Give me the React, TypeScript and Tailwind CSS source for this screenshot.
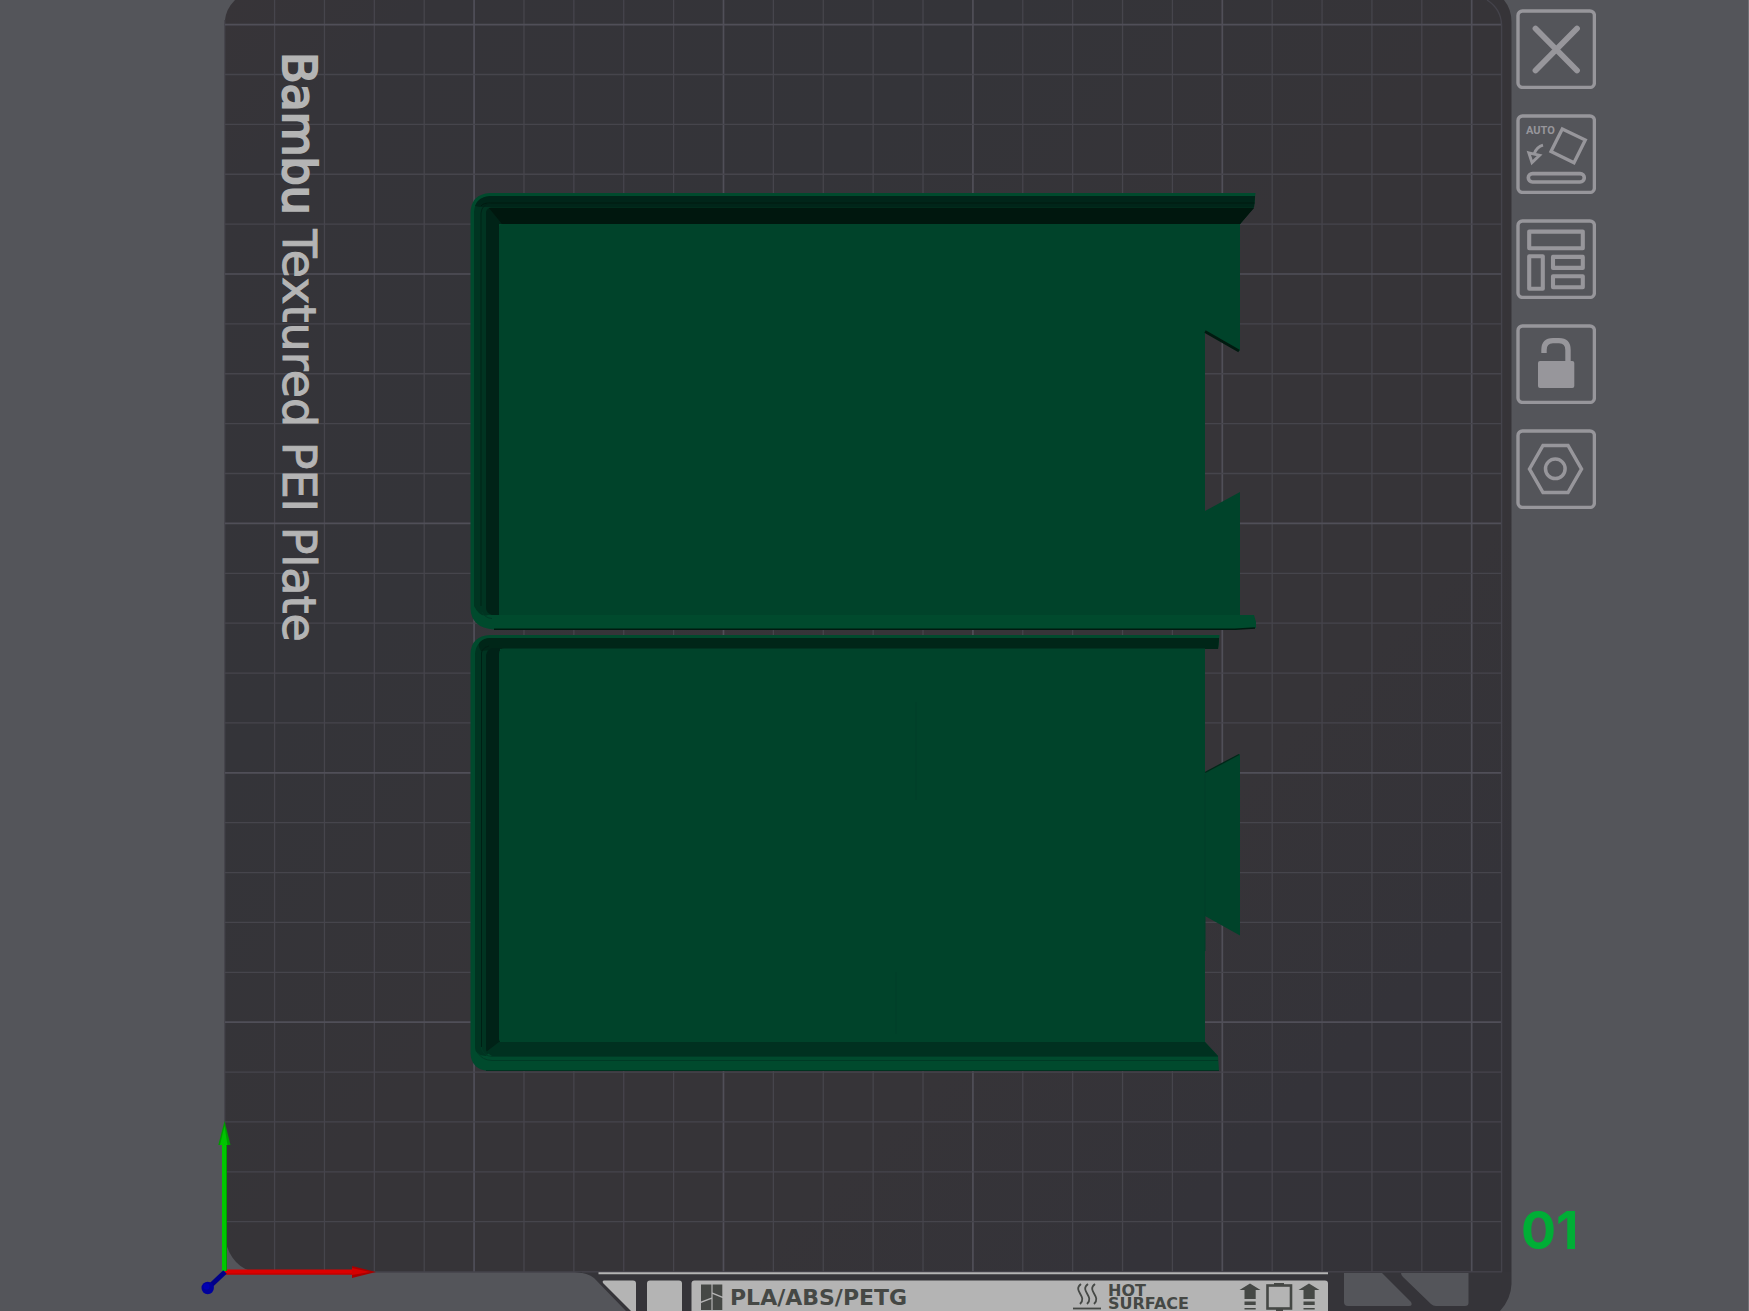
import type { ReactNode } from "react";

const CELL = 49.88;
const PLATE_X = 224.7;
const PLATE_Y = 24.6;

const columns = Array.from({ length: 26 }, (_, i) => i);
const rows = Array.from({ length: 25 }, (_, i) => i);

const tools: { label: string; icon: ReactNode }[] = [
  {
    label: "Remove plate",
    icon: (
      <path d="M19.5 19.5L61 61.5M61 19.5L19.5 61.5" strokeWidth="5.8" strokeLinecap="round" />
    ),
  },
  {
    label: "Auto orient",
    icon: (
      <>
        <text x="10" y="20" fill="currentColor" stroke="none" fontSize="11" fontWeight="700" fontFamily="Roboto, sans-serif">
          AUTO
        </text>
        <path d="M46.3 15L69.3 26L58 48.8L35 37.6Z" strokeWidth="3.3" />
        <path d="M27 31.2C22.5 32.5 20 35 18.3 39.5" strokeWidth="2.8" />
        <path d="M12.8 38.8L23.6 41.4L16 48.6Z" strokeWidth="2.9" />
        <rect x="12.3" y="59.6" width="56" height="8.4" rx="4.2" strokeWidth="3.6" />
      </>
    ),
  },
  {
    label: "Arrange",
    icon: (
      <g strokeWidth="4.1" strokeLinejoin="round">
        <rect x="13.2" y="12.6" width="53.6" height="16.6" />
        <rect x="13.2" y="37.2" width="13.6" height="32.6" />
        <rect x="37" y="37.9" width="29.8" height="11" />
        <rect x="37" y="57.2" width="29.8" height="11" />
      </g>
    ),
  },
  {
    label: "Lock plate",
    icon: (
      <>
        <path d="M28 29V26Q28 16.6 37 16.6H43Q52 16.6 52 26V39" strokeWidth="5.4" />
        <rect x="22" y="37" width="36.3" height="27" rx="2" fill="currentColor" stroke="none" />
      </>
    ),
  },
  {
    label: "Plate settings",
    icon: (
      <g strokeWidth="3.5">
        <path d="M13.5 40L27 16.5H52L65.5 40L52 63.5H27Z" />
        <circle cx="39.3" cy="39.8" r="9.8" />
      </g>
    ),
  },
];

function Grid() {
  return (
    <g fill="none">
      {columns.map((i) => (
        <path
          key={i}
          d={`M${PLATE_X + i * CELL} ${i === 0 ? 20 : 0}V${i === 0 ? 1240 : 1272}`}
          stroke={i % 5 === 0 && i > 0 ? "#504f58" : "#46454c"}
          strokeWidth={i % 5 === 0 && i > 0 ? 1.7 : 1.3}
        />
      ))}
      {rows.map((i) => (
        <path
          key={i}
          d={`M225 ${PLATE_Y + i * CELL}H1502`}
          stroke={i % 5 === 0 ? "#504f58" : "#46454c"}
          strokeWidth={i % 5 === 0 ? 1.7 : 1.3}
        />
      ))}
      <path d="M1487 0Q1501 9 1501.6 25V1272H255" stroke="#44434b" strokeWidth="1.4" />
    </g>
  );
}

function TopTray() {
  return (
    <g>
      {/* outer lip and the stepped walls inside it */}
      <path d="M490 193H1255.5L1254 207L1240 224V300H1200V600H1240V615H1254L1256 622V628L1235 629.5H494Q471 628 470.5 608V213Q471 194 490 193Z" fill="#004a2d" />
      <path d="M490 196H1255L1254 207L1240 224H499V615H488Q480 618 474 606V212Q475 197 490 196Z" fill="#003421" />
      <path d="M490 196H1255L1254 207H480L475 206Q478 197 490 196Z" fill="#002519" />
      <path d="M481 206Q483 203 490 203H1254.5" fill="none" stroke="#001a11" />
      <path d="M481 606V213Q482 204 491 203" fill="none" stroke="#002217" />
      <path d="M486 212Q487 208 491 207.5H1254L1240 224H499V615H492Q486 613 486 608Z" fill="#002317" />
      <path d="M489 208H1254L1240 224H502Z" fill="#00170e" />
      <path d="M482 612Q485 618 492 618.5" fill="none" stroke="#003a25" />
      <path d="M494 629.3H1235L1255 628" fill="none" stroke="#001a10" strokeWidth="1.5" />
      <path d="M504 224H1240V351L1205 331V511L1240 492V615H499V229Q499 224 504 224Z" fill="#00432a" />
      <path d="M1205 331.5L1239 351" stroke="#001a10" strokeWidth="2.6" />
    </g>
  );
}

function BottomTray() {
  return (
    <g>
      <path d="M490 635H1219.5L1218 649H1205V1042L1218 1056L1219 1071H488Q471 1069 470.5 1053V654Q471 636 490 635Z" fill="#004a2d" />
      <path d="M490 638H1219L1218 649H499V1042L486 1056Q475 1055 475 1048V654Q476 640 490 638Z" fill="#003421" />
      <path d="M490 638H1219L1218 649H499L481 651Q477 645 480 642Q484 638 490 638Z" fill="#002618" />
      <path d="M481.5 1047V653Q482 648 489 646" fill="none" stroke="#001f14" />
      <path d="M486 655Q487 649 493 648H500V1042L489 1053Q486 1052 486 1049Z" fill="#002217" />
      <path d="M499 1042H1205L1218 1056H492L486 1052Z" fill="#003120" />
      <path d="M481 1047Q483 1056 492 1056.5H1218M478 1053Q482 1060 492 1060.5H1218" fill="none" stroke="#003a25" />
      <path d="M486 1070.5H1219" stroke="#003320" />
      <path d="M504 648.5H1205V772.5L1240 754V935.5L1205 916V1042H502Q499 1042 499 1039V654Q499 648.5 504 648.5Z" fill="#00432a" />
      <path d="M1205 772.5L1239 754.5" stroke="#002819" strokeWidth="1.4" />
      <path d="M1205 774V951M916 702V800M896 972V1034" fill="none" stroke="#003f28" />
    </g>
  );
}

function FrontLabel() {
  return (
    <g>
      <path d="M575 1272H1511.5V1284Q1511 1299 1500 1311H626L594 1278Q588 1273 575 1272Z" fill="#353439" />
      <g fill="#54555a">
        <path d="M1344 1273H1382L1411 1302Q1413 1306 1409 1306H1348Q1344 1306 1344 1302Z" />
        <path d="M1401 1273H1468.5V1303Q1468.5 1306 1465 1306H1436Q1433 1306 1431 1304L1403 1277Q1401 1275 1401 1273Z" />
      </g>
      <path d="M582 1272H1502" stroke="#44434b" />
      <path d="M598.5 1273.2H1328" stroke="#b4b4b4" strokeWidth="2" />
      <g fill="#b4b4b4">
        <path d="M604 1280.5H633Q636 1280.5 636 1283.5V1311H631L603 1283Q602 1280.5 604 1280.5Z" />
        <path d="M647 1311V1283.5Q647 1280.5 650 1280.5H679Q682 1280.5 682 1283.5V1311Z" />
        <path d="M691.5 1311V1283.5Q691.5 1280.5 694.5 1280.5H1325Q1328 1280.5 1328 1283.5V1311Z" />
      </g>
      <g fill="#454845">
        <path d="M701 1284.5H711.4V1297.5L701 1301.5ZM712.6 1284.5H722.3V1296.5L712.6 1292.5ZM701 1303L711.4 1299V1310H701ZM712.6 1294L722.3 1298V1310H712.6Z" />
        <text x="730" y="1305" fontSize="22" fontWeight="700" fontFamily="'DejaVu Sans', sans-serif">
          PLA/ABS/PETG
        </text>
        <text fontSize="16" fontWeight="700" fontFamily="'DejaVu Sans', sans-serif">
          <tspan x="1108" y="1296">HOT</tspan>
          <tspan x="1108" y="1309">SURFACE</tspan>
        </text>
        <path d="M1250 1283.5L1260.5 1290H1255.7V1299H1244.5V1290H1239.5ZM1244.5 1301.5H1255.7V1305H1244.5ZM1244.5 1308H1255.7V1309.5H1244.5Z" />
        <path d="M1309 1283.5L1319.5 1290H1314.7V1299H1303.5V1290H1298.5ZM1303.5 1301.5H1314.7V1305H1303.5ZM1303.5 1308H1314.7V1309.5H1303.5Z" />
        <path d="M1274 1283H1284V1285H1274ZM1276 1308H1283V1311H1276Z" />
      </g>
      <g fill="none" stroke="#454845">
        <rect x="1267.5" y="1285.5" width="23.5" height="23" strokeWidth="2.6" />
        <path d="M1073 1308.5H1101" strokeWidth="1.8" />
        <path
          d="M1081 1284C1072 1291 1088 1296 1080 1304M1088 1284C1079 1291 1095 1296 1087 1304M1095 1284C1086 1291 1102 1296 1094 1304"
          strokeWidth="1.8"
        />
      </g>
    </g>
  );
}

function Axes() {
  return (
    <g>
      <path d="M225 1272H353" stroke="#dc0000" strokeWidth="5" />
      <path d="M225 1274H353" stroke="#b80000" />
      <path d="M352 1266L376 1272L352 1278Z" fill="#a80000" />
      <path d="M352 1268L370 1272L352 1275Z" fill="#d40000" />
      <path d="M224.5 1271V1143" stroke="#00c800" strokeWidth="5" />
      <path d="M226.5 1271V1143" stroke="#009c00" />
      <path d="M224.5 1121L230.5 1145H218.3Z" fill="#009c00" />
      <path d="M224.5 1126L227.5 1145H220Z" fill="#00c400" />
      <path d="M225 1272L208 1288" stroke="#000088" strokeWidth="5" />
      <circle cx="207.7" cy="1288" r="6.2" fill="#00009c" />
      <circle cx="206.5" cy="1286.5" r="3" fill="#0000b4" />
    </g>
  );
}

export default function App() {
  return (
    <main className="grid min-h-screen grid-cols-[225fr_1287fr_237fr] overflow-hidden bg-[#54555a] shadow-[inset_-1px_0_0_#707176]">
      <svg
        viewBox="225 0 1287 1311"
        className="col-start-2 block w-full self-start overflow-visible"
        role="img"
        aria-label="Build plate with two parts"
      >
        <defs>
          <linearGradient id="plate" x1="0" y1="0" x2="1" y2="1">
            <stop offset="0" stopColor="#373438" />
            <stop offset="0.08" stopColor="#353439" />
            <stop offset="0.3" stopColor="#343439" />
            <stop offset="0.5" stopColor="#363438" />
            <stop offset="0.7" stopColor="#363438" />
            <stop offset="0.85" stopColor="#343339" />
            <stop offset="1" stopColor="#343338" />
          </linearGradient>
        </defs>
        <path d="M235 0H1504Q1511.5 9 1511.5 22V1272H255Q232 1268 225 1240V20Q226 9 235 0Z" fill="url(#plate)" />
        <Grid />
        <text
          transform="translate(283 52) rotate(90)"
          fill="#b4b4b4"
          stroke="#b4b4b4"
          strokeWidth="1"
          fontSize="46"
          fontFamily="'DejaVu Sans', sans-serif"
        >
          <tspan strokeWidth="2.2">Bambu</tspan> Textured PEI Plate
        </text>
        <TopTray />
        <BottomTray />
        <FrontLabel />
        <Axes />
      </svg>

      <aside className="flex flex-col items-start pt-[9px] pb-7 pl-1">
        <div className="flex flex-col gap-[25px]">
          {tools.map((tool) => (
            <button
              key={tool.label}
              type="button"
              aria-label={tool.label}
              className="block size-20 text-[#97969b]"
            >
              <svg viewBox="0 0 80 80" className="size-20" fill="none" stroke="currentColor">
                <rect x="2" y="2" width="76.4" height="76.4" rx="4.5" strokeWidth="3.4" />
                {tool.icon}
              </svg>
            </button>
          ))}
        </div>
        <p className="mt-auto pl-[5px] font-['Inter',sans-serif] text-[52px] leading-[104px] font-bold text-[#00ae36]">
          01
        </p>
      </aside>
    </main>
  );
}
